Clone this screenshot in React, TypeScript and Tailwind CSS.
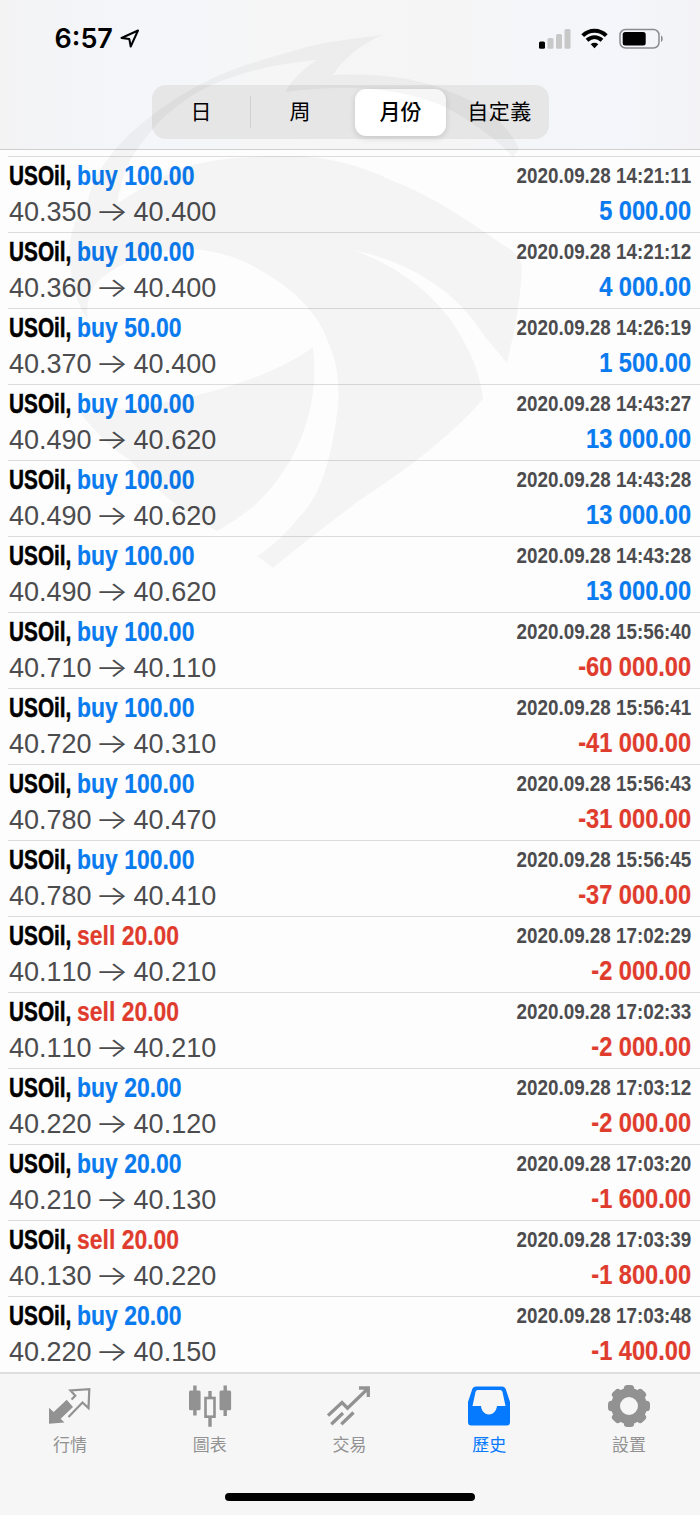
import React from 'react'

const trades = [
  { side: 'buy', volume: '100.00', open: '40.350', close: '40.400', time: '2020.09.28 14:21:11', profit: '5 000.00' },
  { side: 'buy', volume: '100.00', open: '40.360', close: '40.400', time: '2020.09.28 14:21:12', profit: '4 000.00' },
  { side: 'buy', volume: '50.00', open: '40.370', close: '40.400', time: '2020.09.28 14:26:19', profit: '1 500.00' },
  { side: 'buy', volume: '100.00', open: '40.490', close: '40.620', time: '2020.09.28 14:43:27', profit: '13 000.00' },
  { side: 'buy', volume: '100.00', open: '40.490', close: '40.620', time: '2020.09.28 14:43:28', profit: '13 000.00' },
  { side: 'buy', volume: '100.00', open: '40.490', close: '40.620', time: '2020.09.28 14:43:28', profit: '13 000.00' },
  { side: 'buy', volume: '100.00', open: '40.710', close: '40.110', time: '2020.09.28 15:56:40', profit: '-60 000.00' },
  { side: 'buy', volume: '100.00', open: '40.720', close: '40.310', time: '2020.09.28 15:56:41', profit: '-41 000.00' },
  { side: 'buy', volume: '100.00', open: '40.780', close: '40.470', time: '2020.09.28 15:56:43', profit: '-31 000.00' },
  { side: 'buy', volume: '100.00', open: '40.780', close: '40.410', time: '2020.09.28 15:56:45', profit: '-37 000.00' },
  { side: 'sell', volume: '20.00', open: '40.110', close: '40.210', time: '2020.09.28 17:02:29', profit: '-2 000.00' },
  { side: 'sell', volume: '20.00', open: '40.110', close: '40.210', time: '2020.09.28 17:02:33', profit: '-2 000.00' },
  { side: 'buy', volume: '20.00', open: '40.220', close: '40.120', time: '2020.09.28 17:03:12', profit: '-2 000.00' },
  { side: 'buy', volume: '20.00', open: '40.210', close: '40.130', time: '2020.09.28 17:03:20', profit: '-1 600.00' },
  { side: 'sell', volume: '20.00', open: '40.130', close: '40.220', time: '2020.09.28 17:03:39', profit: '-1 800.00' },
  { side: 'buy', volume: '20.00', open: '40.220', close: '40.150', time: '2020.09.28 17:03:48', profit: '-1 400.00' },
]

const StatusBar = () => (
  <div className="flex h-[77px] items-center justify-between pr-[36px] pl-[54.500px]">
    <div className="flex items-center gap-[7px]">
      <span className="font-['Inter'] text-[27px] leading-none font-semibold text-black">6:57</span>
      <svg width="20" height="20" viewBox="0 0 20 20" fill="none" stroke="#000" strokeWidth="2" strokeLinejoin="round">
        <path d="M1.500 9 18 1.500 10.700 17.500 9.300 10Z" />
      </svg>
    </div>
    <svg width="126" height="24" viewBox="0 0 126 24">
      <rect x="1" y="14.500" width="6" height="7.200" rx="1.500" fill="#000" />
      <rect x="9.500" y="11" width="6" height="10.700" rx="1.500" fill="#c8c8c9" />
      <rect x="18" y="7" width="6" height="14.700" rx="1.500" fill="#c8c8c9" />
      <rect x="26.500" y="2" width="6" height="19.700" rx="1.500" fill="#c8c8c9" />
      <g fill="none" stroke="#000" strokeWidth="4">
        <path d="M44.700 8.600C51.500 2 61.500 2 68.300 8.600" />
        <path d="M49 13.200C53.500 9.200 59.500 9.200 64 13.200" />
      </g>
      <path d="M52.700 17.200C55 15.300 58 15.300 60.300 17.200L56.500 21.300Z" fill="#000" />
      <rect x="82" y="2.500" width="39" height="18.500" rx="5.500" fill="none" stroke="#8b8c8e" strokeWidth="1.500" />
      <rect x="84.700" y="5" width="23" height="13.500" rx="2.500" fill="#000" />
      <path d="M123 8.500c2.300 1 2.300 5.500 0 6.500z" fill="#8b8c8e" />
    </svg>
  </div>
)

const PeriodSwitch = () => (
  <div className="ml-[152px] flex h-[54px] w-[397px] items-center rounded-[14px] bg-[#e6e6e7] font-['Inter','Noto_Sans_CJK_TC',sans-serif] text-[21px] text-black">
    <div className="w-[98px] text-center">日</div>
    <div className="h-[32px] w-px bg-[#d2d2d4]" />
    <div className="w-[98px] text-center">周</div>
    <div className="ml-[6px] flex h-[47px] w-[91px] items-center justify-center rounded-[11px] bg-white font-medium shadow-[0_2px_6px_rgba(0,0,0,0.14)]">
      月份
    </div>
    <div className="flex-1 pl-[4px] text-center tracking-[0.500px]">自定義</div>
  </div>
)

const Watermark = () => (
  <svg className="pointer-events-none absolute top-0 left-0" width="700" height="600" viewBox="0 0 700 600" fill="#000" fillOpacity="0.036">
    <path d="M382 35C345 40 320 42 293 51C245 64 222 73 203 83C170 100 133 126 110 156C98 172 92 182 88 200C74 218 67 240 70 262C71 285 77 305 88 320C85 300 92 286 103 277C130 256 160 249 193 249C222 252 242 259 260 270C300 293 320 318 328 342C339 365 340 395 337 413C331 460 320 497 300 516C286 533 272 547 257 556L273 568C300 545 330 523 360 500C400 474 450 438 483 399C481 380 474 358 463 340C443 300 400 266 353 250C410 262 450 290 473 320C488 342 498 352 507 363C515 330 521 298 522 266C519 254 510 248 503 245C470 221 430 195 393 181C360 165 325 156 293 156C255 156 222 158 193 165C165 174 140 188 117 204C120 186 124 174 130 160C150 130 165 113 193 95C225 76 270 64 317 60C302 69 292 80 285 92C350 84 400 88 443 106C470 120 495 138 513 157L519 149C510 127 485 104 453 93C420 78 380 73 333 75C343 59 360 45 382 35Z" />
    <path d="M313 347C290 364 260 377 227 387C190 398 130 412 80 413C96 432 110 448 130 460C145 478 180 513 217 531C240 518 254 507 265 495C301 456 320 402 313 347Z" />
  </svg>
)

const tabs = [
  {
    label: '行情',
    viewBox: '48 19 44 44',
    icon: (
      <>
        <path d="M49 42.700V58.700L64.500 57.600 60.700 53.700 73 42 66.700 34.700 53.700 47Z" fill="currentColor" />
        <path d="M71.500 34.500 75.300 30.700 70.500 25.500 89.300 24.200 88.500 43 82.500 37.500 68.500 52" fill="none" stroke="currentColor" strokeWidth="2.200" />
      </>
    ),
  },
  {
    label: '圖表',
    viewBox: '188 19 44 44',
    icon: (
      <g fill="currentColor">
        <path d="M193.200 20.500h3.400v30h-3.400zM223.500 20.500h3.400v30.500h-3.400zM208.300 26h3.400v6h-3.400zM208.300 52h3.400v9.700h-3.400z" />
        <rect x="189" y="25.500" width="11.600" height="19.700" rx="1.500" />
        <rect x="219.500" y="25.500" width="11.600" height="19.700" rx="1.500" />
        <rect x="205.500" y="33" width="9" height="18.700" fill="none" stroke="currentColor" strokeWidth="2.600" />
      </g>
    ),
  },
  {
    label: '交易',
    viewBox: '0 0 44 44',
    icon: (
      <g fill="none" stroke="currentColor" strokeWidth="3.300">
        <path d="M1 31.500 15 18.500 20.500 24.200 41 4.500M32 4H41.300V13" />
        <path d="M4.300 40.200 16 29M14.300 40.200 26.500 28.500" />
      </g>
    ),
  },
  {
    label: '歷史',
    viewBox: '0 0 44 44',
    icon: (
      <path
        fill="currentColor"
        fillRule="evenodd"
        d="M9 2.500H35C37 2.500 38 3.500 38.700 5L43 18V38C43 40.500 42 41.500 39.500 41.500H4.500C2 41.500 1 40.500 1 38V18L5.300 5C6 3.500 7 2.500 9 2.500ZM11.500 6C10 6 9 6.500 8.500 8L5.500 22H14C14.300 26 17 30.500 22 30.500S29.500 26 30 22H38.500L35.500 8C35 6.500 34 6 32.500 6Z"
      />
    ),
  },
  {
    label: '設置',
    viewBox: '0 0 44 44',
    icon: (
      <g fill="currentColor">
        <circle cx="22" cy="22" r="13.500" fill="none" stroke="currentColor" strokeWidth="9" />
        {[0, 45, 90, 135, 180, 225, 270, 315].map((angle) => (
          <rect key={angle} x="16.800" y="1" width="10.400" height="9" rx="3.500" transform={`rotate(${angle} 22 22)`} />
        ))}
      </g>
    ),
  },
]

const App = () => {
  return (
    <div className="relative flex h-[1515px] w-[700px] flex-col overflow-hidden bg-[#fdfdfd]">
      <header className="h-[150px] border-b border-[#cfcfd0] bg-[linear-gradient(90deg,#f3f3f4_0%,#f4f6fa_20%,#f6f6f6_40%,#f5f5f5_62%,#f4f6fb_88%,#f3f3f6_100%)]">
        <StatusBar />
        <div className="pt-[8px]">
          <PeriodSwitch />
        </div>
      </header>

      <main className="pt-[6px] pl-[8px] [font-kerning:none]">
        {trades.map((trade, index) => (
          <div key={index} className="flex h-[76px] justify-between border-t border-[#dcdcdd] pr-[9px] pl-px">
            <div>
              <div className="flex h-[39px] items-center font-['Liberation_Sans',sans-serif] text-[27px] font-bold">
                <div className="w-[68px] text-black">
                  <span className="inline-block origin-left scale-x-[0.77] whitespace-nowrap [-webkit-text-stroke:0.5px]">USOil,</span>
                </div>
                <span
                  className={`inline-block origin-left scale-x-[0.85] whitespace-nowrap [-webkit-text-stroke:0.2px] ${trade.side === 'buy' ? 'text-[#0a7aef]' : 'text-[#e03c2e]'}`}
                >
                  {trade.side} {trade.volume}
                </span>
              </div>
              <div className="flex h-[32px] items-center font-['Liberation_Sans',sans-serif] text-[27px] text-[#4c4c4f]">
                <span>{trade.open}</span>
                <span className="-ml-px w-[43px] scale-x-[1.3] pr-px text-center font-['Inter'] font-light">→</span>
                <span>{trade.close}</span>
              </div>
            </div>
            <div className="flex flex-col items-end font-['Liberation_Sans',sans-serif] font-bold">
              <div className="flex h-[37px] origin-right scale-x-[0.855] items-center text-[22px] text-[#4c4c4f]">{trade.time}</div>
              <div
                className={`flex h-[35px] origin-right scale-x-[0.875] items-center text-[27px] [-webkit-text-stroke:0.2px] ${trade.profit.startsWith('-') ? 'text-[#e03c2e]' : 'text-[#0a7aef]'}`}
              >
                {trade.profit}
              </div>
            </div>
          </div>
        ))}
      </main>

      <footer className="flex flex-1 flex-col items-center border-t-2 border-[#dededf] bg-[#f6f6f6]">
        <nav className="flex w-full pt-[10px] pr-px">
          {tabs.map((tab) => (
            <div
              key={tab.label}
              className={`flex flex-1 flex-col items-center ${tab.label === '歷史' ? 'text-[#057aff]' : 'text-[#929292]'}`}
            >
              <svg width="44" height="44" viewBox={tab.viewBox}>
                {tab.icon}
              </svg>
              <span className="mt-[3px] font-['Noto_Sans_CJK_TC',sans-serif] text-[17px] leading-[25px]">{tab.label}</span>
            </div>
          ))}
        </nav>
        <div className="mt-[37px] h-[8px] w-[250px] rounded-full bg-black" />
      </footer>

      <Watermark />
    </div>
  )
}

export default App
